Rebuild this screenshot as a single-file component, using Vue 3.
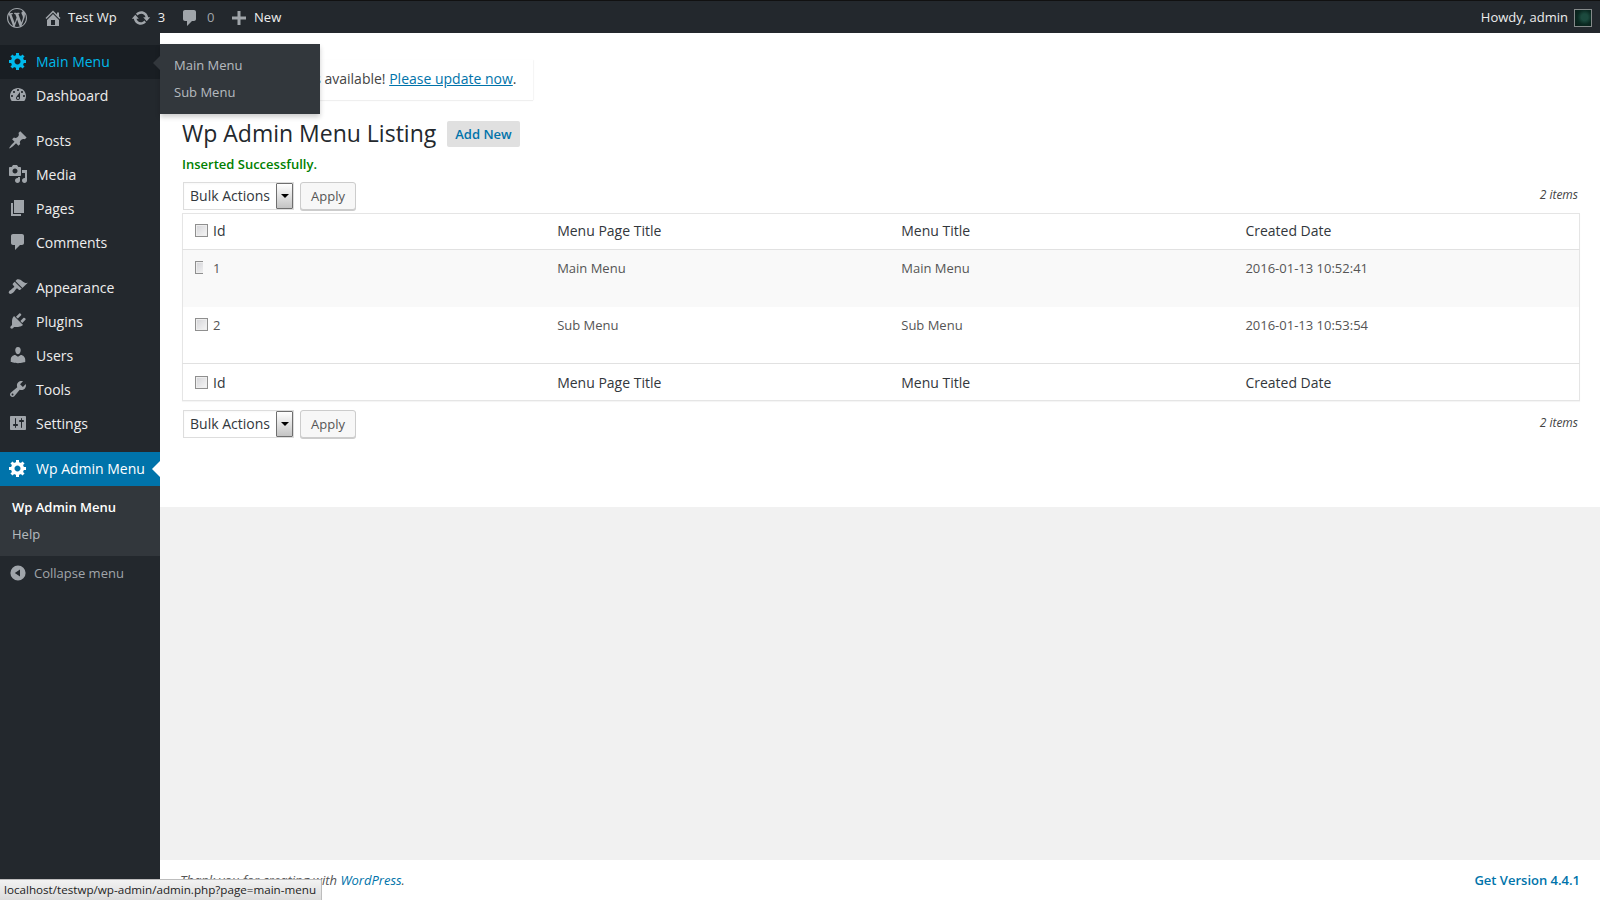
<script setup>
const icons = {
  wp: 'M20 10c0-5.51-4.49-10-10-10C4.48 0 0 4.49 0 10c0 5.52 4.48 10 10 10 5.51 0 10-4.48 10-10zM7.78 15.37L4.37 6.22c.55-.02 1.17-.08 1.17-.08.5-.06.44-1.13-.06-1.11 0 0-1.45.11-2.37.11-.18 0-.37 0-.58-.01C4.12 2.69 6.87 1.11 10 1.11c2.33 0 4.45.87 6.05 2.34-.68-.11-1.65.39-1.65 1.58 0 .74.45 1.36.9 2.1.35.61.55 1.36.55 2.46 0 1.49-1.4 5-1.4 5l-3.03-8.37c.54-.02.82-.17.82-.17.5-.05.44-1.25-.06-1.22 0 0-1.44.12-2.38.12-.87 0-2.33-.12-2.33-.12-.5-.03-.56 1.2-.06 1.22l.92.08 1.26 3.41zM17.41 10c.24-.64.74-1.87.43-4.25.7 1.29 1.05 2.71 1.05 4.25 0 3.29-1.73 6.24-4.4 7.78.97-2.59 1.94-5.2 2.92-7.78zM6.1 18.09C3.12 16.65 1.11 13.53 1.11 10c0-1.3.23-2.48.72-3.59C3.25 10.3 4.67 14.2 6.1 18.09zm4.03-6.63l2.58 6.98c-.86.29-1.76.45-2.71.45-.79 0-1.57-.11-2.29-.33.81-2.38 1.62-4.74 2.42-7.1z',
  home: 'M16 8.5l1.53 1.53-1.06 1.06L10 4.62l-6.47 6.47-1.06-1.06L10 2.5l4 4v-2h2v4zm-6-2.46l6 5.99V18H4v-5.97zM12 17v-5H8v5h4z',
  update: 'M10.2 3.28c3.53 0 6.43 2.61 6.92 6h2.08l-3.5 4-3.5-4h2.32c-.45-1.97-2.21-3.44-4.32-3.44-1.45 0-2.73.71-3.54 1.78L4.95 5.66C6.23 4.2 8.11 3.28 10.2 3.28zm-.4 13.44c-3.52 0-6.43-2.61-6.92-6H.8l3.5-4c1.17 1.33 2.33 2.67 3.5 4H5.48c.45 1.97 2.21 3.44 4.32 3.44 1.45 0 2.73-.71 3.54-1.78l1.71 1.95c-1.28 1.46-3.15 2.39-5.25 2.39z',
  comment: 'M5 2h9c1.1 0 2 .9 2 2v7c0 1.1-.9 2-2 2h-2l-5 5v-5H5c-1.1 0-2-.9-2-2V4c0-1.1.9-2 2-2z',
  plus: 'M17 8.5v3h-5.5V17h-3v-5.5H3v-3h5.5V3h3v5.5z',
  gear: 'M18 12h-2.18c-.17.7-.44 1.35-.81 1.93l1.54 1.54-2.1 2.1-1.54-1.54c-.58.36-1.23.63-1.91.79V19H8v-2.18c-.68-.16-1.33-.43-1.91-.79l-1.54 1.54-2.12-2.12 1.54-1.54c-.36-.58-.63-1.23-.79-1.91H1V9.03h2.17c.16-.7.44-1.35.8-1.94L2.43 5.55l2.1-2.1 1.54 1.54c.58-.37 1.24-.64 1.93-.81V2h3v2.18c.68.16 1.33.43 1.91.79l1.54-1.54 2.12 2.12-1.54 1.54c.36.59.64 1.24.8 1.94H18V12zm-8.5 1.5c1.66 0 3-1.34 3-3s-1.34-3-3-3-3 1.34-3 3 1.34 3 3 3z',
  dashboard: 'M3.76 16h12.48c1.1-1.37 1.76-3.11 1.76-5 0-4.42-3.58-8-8-8s-8 3.58-8 8c0 1.89.66 3.63 1.76 5zM10 4c.55 0 1 .45 1 1s-.45 1-1 1-1-.45-1-1 .45-1 1-1zM6 6c.55 0 1 .45 1 1s-.45 1-1 1-1-.45-1-1 .45-1 1-1zm8 0c.55 0 1 .45 1 1s-.45 1-1 1-1-.45-1-1 .45-1 1-1zm-5.37 5.55L12 7v6c0 1.1-.9 2-2 2s-2-.9-2-2c0-.57.24-1.08.63-1.45zM4 10c.55 0 1 .45 1 1s-.45 1-1 1-1-.45-1-1 .45-1 1-1zm12 0c.55 0 1 .45 1 1s-.45 1-1 1-1-.45-1-1 .45-1 1-1zm-5 3c0-.55-.45-1-1-1s-1 .45-1 1 .45 1 1 1 1-.45 1-1z',
  posts: 'M10.44 3.02l1.82-1.82 6.36 6.35-1.83 1.82c-1.05-.68-2.48-.57-3.41.36l-.75.75c-.92.93-1.04 2.35-.35 3.41l-1.83 1.82-2.41-2.41-2.8 2.79c-.42.42-3.38 2.71-3.8 2.29s1.86-3.39 2.28-3.81l2.79-2.79L4.1 9.36l1.83-1.82c1.05.69 2.48.57 3.4-.36l.75-.75c.93-.92 1.05-2.35.36-3.41z',
  media: 'M13 11V4c0-.55-.45-1-1-1h-1.67L9 1H5L3.67 3H2c-.55 0-1 .45-1 1v7c0 .55.45 1 1 1h10c.55 0 1-.45 1-1zM7 4.5c1.38 0 2.5 1.12 2.5 2.5S8.38 9.5 7 9.5 4.5 8.38 4.5 7 5.62 4.5 7 4.5zM14 6h5v10.5c0 1.38-1.12 2.5-2.5 2.5S14 17.88 14 16.5s1.12-2.5 2.5-2.5c.17 0 .34.02.5.05V9h-3V6zm-4 8.05V13h2v3.5c0 1.38-1.12 2.5-2.5 2.5S7 17.88 7 16.5 8.12 14 9.5 14c.17 0 .34.02.5.05z',
  pages: 'M6 15V2h10v13H6zm-1 1h8v2H3V5h2v11z',
  appearance: 'M14.48 11.06L7.41 3.99l1.5-1.5c.5-.56 2.3-.47 3.51.32 1.21.8 1.43 1.28 2.91 2.1 1.18.64 2.45 1.26 4.45.85zm-.71.71L6.7 4.7 4.93 6.47c-.39.39-.39 1.02 0 1.41l1.06 1.06c.39.39.39 1.03 0 1.42-.6.6-1.43 1.11-2.21 1.69-.35.26-.7.53-1.01.84C1.43 13.23 0 15.2 1.26 16.46c1.26 1.25 3.22-.17 4.52-1.51.3-.3.58-.65.84-1 .58-.79 1.09-1.62 1.69-2.21.39-.39 1.02-.39 1.41 0l1.06 1.06c.39.39 1.02.39 1.41 0z',
  plugins: 'M13.11 4.36L9.87 7.6 8 5.73l3.24-3.24c.35-.34 1.05-.2 1.56.32.52.51.66 1.21.31 1.55zm-8 1.77l.91-1.12 9.01 9.01-1.19.84c-.71.71-2.63 1.16-3.82 1.16H6.14L4.9 17.26c-.59.59-1.54.59-2.12 0-.59-.58-.59-1.53 0-2.12l1.24-1.24v-3.88c0-1.13.4-3.19 1.09-3.89zm7.26 3.97l3.24-3.24c.34-.35 1.04-.21 1.55.31.52.51.66 1.21.31 1.55l-3.24 3.25z',
  users: 'M10 9.25c-2.27 0-2.73-3.44-2.73-3.44C7 4.02 7.82 2 9.97 2c2.16 0 2.98 2.02 2.71 3.81 0 0-.41 3.44-2.68 3.44zm0 2.57L12.72 10c2.39 0 4.52 2.33 4.52 4.53v2.49s-3.65 1.13-7.24 1.13c-3.65 0-7.24-1.13-7.24-1.13v-2.49c0-2.25 1.94-4.48 4.47-4.48z',
  tools: 'M16.68 9.77c-1.34 1.34-3.3 1.67-4.95.99l-5.41 6.52c-.99.99-2.59.99-3.58 0s-.99-2.59 0-3.57l6.52-5.42c-.68-1.65-.35-3.61.99-4.95 1.28-1.28 3.12-1.62 4.72-1.06l-2.89 2.89 2.82 2.82 2.86-2.87c.53 1.58.18 3.39-1.08 4.65zM3.81 16.21c.4.39 1.04.39 1.43 0 .4-.4.4-1.04 0-1.43-.39-.4-1.03-.4-1.43 0-.39.39-.39 1.03 0 1.43z',
  settings: 'M18 16V4c0-.55-.45-1-1-1H3c-.55 0-1 .45-1 1v12c0 .55.45 1 1 1h14c.55 0 1-.45 1-1zM8 11h1c.55 0 1 .45 1 1s-.45 1-1 1H8v1.5c0 .28-.22.5-.5.5s-.5-.22-.5-.5V13H6c-.55 0-1-.45-1-1s.45-1 1-1h1V5.5c0-.28.22-.5.5-.5s.5.22.5.5V11zm5-2h-1c-.55 0-1-.45-1-1s.45-1 1-1h1V5.5c0-.28.22-.5.5-.5s.5.22.5.5V7h1c.55 0 1 .45 1 1s-.45 1-1 1h-1v5.5c0 .28-.22.5-.5.5s-.5-.22-.5-.5V9z',
  collapse: 'M10 .5a9.5 9.5 0 1 0 0 19 9.5 9.5 0 0 0 0-19zM12.5 5.5v9L6 10z'
}
const groups = [
  [{ label: 'Main Menu', icon: 'gear', state: 'hover' }, { label: 'Dashboard', icon: 'dashboard' }],
  [{ label: 'Posts', icon: 'posts' }, { label: 'Media', icon: 'media' }, { label: 'Pages', icon: 'pages' }, { label: 'Comments', icon: 'comment' }],
  [{ label: 'Appearance', icon: 'appearance' }, { label: 'Plugins', icon: 'plugins' }, { label: 'Users', icon: 'users' }, { label: 'Tools', icon: 'tools' }, { label: 'Settings', icon: 'settings' }]
]
const columns = ['Id', 'Menu Page Title', 'Menu Title', 'Created Date']
const rows = [
  ['1', 'Main Menu', 'Main Menu', '2016-01-13 10:52:41'],
  ['2', 'Sub Menu', 'Sub Menu', '2016-01-13 10:53:54']
]
</script>

<template>
  <div class="page">
    <header class="topbar">
      <svg class="bar-logo" viewBox="0 0 20 20"><path :d="icons.wp" /></svg>
      <svg class="bar-icon home" viewBox="0 0 20 20"><path :d="icons.home" /></svg>
      <span class="bar-text site">Test Wp</span>
      <svg class="bar-icon update" viewBox="0 0 20 20"><path :d="icons.update" /></svg>
      <span class="bar-text count">3</span>
      <svg class="bar-icon comment" viewBox="0 0 20 20"><path :d="icons.comment" /></svg>
      <span class="bar-text zero">0</span>
      <svg class="bar-icon plus" viewBox="0 0 20 20"><path :d="icons.plus" /></svg>
      <span class="bar-text">New</span>
      <span class="bar-text howdy">Howdy, admin</span>
      <span class="avatar"></span>
    </header>

    <div class="shell">
      <aside class="sidebar">
        <nav v-for="(group, i) in groups" :key="i" class="menu-group">
          <a v-for="item in group" :key="item.label" class="menu-item" :class="item.state">
            <svg class="menu-icon" viewBox="0 0 20 20"><path :d="icons[item.icon]" /></svg>
            <span>{{ item.label }}</span>
          </a>
        </nav>
        <a class="menu-item current">
          <svg class="menu-icon" viewBox="0 0 20 20"><path :d="icons.gear" /></svg>
          <span>Wp Admin Menu</span>
        </a>
        <div class="submenu">
          <a class="sub-link strong">Wp Admin Menu</a>
          <a class="sub-link">Help</a>
        </div>
        <a class="collapse">
          <svg class="collapse-icon" viewBox="0 0 20 20"><path fill-rule="evenodd" :d="icons.collapse" /></svg>
          <span>Collapse menu</span>
        </a>
        <div class="flyout">
          <a class="fly-link">Main Menu</a>
          <a class="fly-link">Sub Menu</a>
        </div>
      </aside>

      <main class="main">
        <section class="content">
          <div class="nag"><a class="nag-link">WordPress 4.4.2</a> is available! <a class="nag-link">Please update now</a>.</div>
          <div class="title-row">
            <h1>Wp Admin Menu Listing</h1>
            <a class="add-new">Add New</a>
          </div>
          <p class="success">Inserted Successfully.</p>

          <div class="tablenav">
            <div class="fake-select"><span>Bulk Actions</span><i class="select-btn"></i></div>
            <button class="apply">Apply</button>
            <span class="num">2 items</span>
          </div>

          <table class="list">
            <thead>
              <tr>
                <th class="cb"><input type="checkbox" /></th>
                <th v-for="c in columns" :key="c">{{ c }}</th>
              </tr>
            </thead>
            <tbody>
              <tr v-for="(row, i) in rows" :key="row[0]" :class="{ alt: i === 0 }">
                <td class="cb"><input type="checkbox" /></td>
                <td v-for="(cell, j) in row" :key="j">{{ cell }}</td>
              </tr>
            </tbody>
            <tfoot>
              <tr>
                <th class="cb"><input type="checkbox" /></th>
                <th v-for="c in columns" :key="c">{{ c }}</th>
              </tr>
            </tfoot>
          </table>

          <div class="tablenav bottom">
            <div class="fake-select"><span>Bulk Actions</span><i class="select-btn"></i></div>
            <button class="apply">Apply</button>
            <span class="num">2 items</span>
          </div>
        </section>
        <div class="gap"></div>
        <footer class="footer">
          <em>Thank you for creating with <a>WordPress</a>.</em>
          <strong>Get Version 4.4.1</strong>
        </footer>
      </main>
    </div>

    <div class="status">localhost/testwp/wp-admin/admin.php?page=main-menu</div>
  </div>
</template>

<style>
html, body { margin: 0; background: #f1f1f1; }
</style>

<style scoped>
.page {
  position: relative;
  height: 900px;
  display: flex;
  flex-direction: column;
  overflow: hidden;
  font-family: "Open Sans", sans-serif;
  font-size: 13px;
  color: #444;
}
a { cursor: pointer; }

/* top bar */
.topbar {
  height: 33px;
  box-sizing: border-box;
  flex: none;
  display: flex;
  align-items: center;
  padding: 1px 8px 0 7px;
  background: #23282d;
  border-top: 1px solid #111;
  color: #eee;
}
.topbar svg { fill: #a0a5aa; display: block; flex: none; }
.bar-logo { width: 20px; height: 20px; margin-right: 16px; }
.bar-icon { width: 20px; height: 20px; }
.bar-text { line-height: 20px; white-space: nowrap; margin-bottom: 2px; }
.home { margin: 0 5px 0 0; }
.site { margin-right: 14px; }
.update { margin-right: 7px; }
.count { margin-right: 15px; }
.comment { margin-right: 7px; }
.zero { color: #a0a5aa; margin-right: 15px; width: 8px; }
.plus { margin: 0 5px 0 -1px; }
.howdy { margin-left: auto; margin-right: 6px; }
.avatar {
  box-sizing: border-box;
  width: 18px;
  height: 18px;
  border: 1px solid #858a8a;
  background: radial-gradient(circle at 60% 45%, #1c4a3e 0 25%, #0b2a22 55%, #081a16 100%);
}

.shell { flex: 1; display: flex; min-height: 0; }

/* sidebar */
.sidebar {
  position: relative;
  width: 160px;
  flex: none;
  background: #23282d;
  padding-top: 12px;
}
.menu-group { display: block; margin-bottom: 11px; }
.menu-item {
  height: 34px;
  box-sizing: border-box;
  padding-bottom: 2px;
  display: flex;
  align-items: center;
  color: #eee;
  font-size: 14px;
  white-space: nowrap;
}
.menu-icon { width: 20px; height: 20px; margin: 0 8px; flex: none; fill: #a0a5aa; }
.menu-item.hover { background: #191e23; color: #00b9eb; }
.menu-item.hover .menu-icon { fill: #00b9eb; }
.menu-item.current { position: relative; background: #0073aa; color: #fff; }
.menu-item.current .menu-icon { fill: #fff; }
.menu-item.current::after {
  content: "";
  position: absolute;
  right: 0;
  top: 9px;
  border: 8px solid transparent;
  border-right-color: #fff;
  border-left-width: 0;
}
.submenu {
  background: #32373c;
  padding: 7px 0;
  height: 70px;
  box-sizing: border-box;
}
.sub-link {
  display: block;
  height: 27px;
  line-height: 28px;
  padding-left: 12px;
  font-size: 13px;
  color: rgba(240, 245, 250, .7);
}
.sub-link.strong { color: #fff; font-weight: 600; }
.collapse {
  height: 34px;
  display: flex;
  align-items: center;
  padding-left: 10px;
  color: #a0a5aa;
  font-size: 13px;
}
.collapse-icon { width: 16px; height: 16px; fill: #a0a5aa; margin-right: 8px; }
.flyout {
  position: absolute;
  left: 160px;
  top: 11px;
  z-index: 5;
  width: 160px;
  height: 70px;
  box-sizing: border-box;
  padding: 7px 0;
  background: #32373c;
  box-shadow: 0 3px 5px rgba(0, 0, 0, .2);
}
.flyout::before {
  content: "";
  position: absolute;
  left: -7px;
  top: 11px;
  border: 8px solid transparent;
  border-right-color: #32373c;
  border-left-width: 0;
  width: 0;
}
.fly-link {
  display: block;
  height: 27px;
  line-height: 28px;
  padding-left: 14px;
  color: rgba(240, 245, 250, .7);
}

/* main */
.main { flex: 1; min-width: 0; display: flex; flex-direction: column; }
.content {
  height: 474px;
  box-sizing: border-box;
  background: #fff;
  padding: 27px 20px 0 22px;
}
.gap { flex: 1; background: #f1f1f1; }
.nag {
  display: inline-block;
  box-sizing: border-box;
  height: 40px;
  width: 351px;
  padding: 8px 15px 0 15px;
  line-height: 21px;
  font-size: 14px;
  color: #444;
  background: #fff;
  border-left: 4px solid #ffba00;
  box-shadow: 0 1px 1px rgba(0, 0, 0, .06), 1px 0 1px rgba(0, 0, 0, .03);
  white-space: nowrap;
}
.nag-link { color: #0073aa; text-decoration: underline; }
.title-row { display: flex; align-items: center; margin-top: 20px; height: 28px; }
h1 {
  margin: 0 0 2px;
  font-size: 23px;
  font-weight: 400;
  line-height: 28px;
  color: #23282d;
  white-space: nowrap;
}
.add-new {
  margin-left: 11px;
  height: 26px;
  line-height: 26px;
  padding: 0 8px;
  border-radius: 2px;
  background: #e0e0e0;
  color: #0073aa;
  font-weight: 600;
}
.success {
  margin: 7px 0 0;
  line-height: 18px;
  color: #008000;
  font-weight: 600;
}
.tablenav {
  display: flex;
  align-items: center;
  height: 28px;
  margin-top: 9px;
  padding-left: 1px;
}
.fake-select {
  box-sizing: border-box;
  width: 111px;
  height: 28px;
  display: flex;
  align-items: center;
  justify-content: space-between;
  padding: 0 0 0 6px;
  border: 1px solid #ddd;
  background: #fff;
  color: #32373c;
  font-size: 14px;
  box-shadow: inset 0 1px 2px rgba(0, 0, 0, .03);
}
.fake-select span { margin-bottom: 2px; }
.select-btn {
  position: relative;
  box-sizing: border-box;
  width: 17px;
  height: 26px;
  border: 1px solid #6f6f6f;
  border-radius: 1px;
  background: linear-gradient(#fff, #c4c4c4);
}
.select-btn::after {
  content: "";
  position: absolute;
  left: 4px;
  top: 10px;
  border: 4px solid transparent;
  border-top-color: #000;
  border-bottom-width: 0;
}
.apply {
  margin-left: 6px;
  box-sizing: border-box;
  width: 56px;
  height: 28px;
  padding: 0;
  border: 1px solid #ccc;
  border-radius: 3px;
  background: #f7f7f7;
  box-shadow: 0 1px 0 #ccc;
  color: #555;
  font: 13px "Open Sans", sans-serif;
}
.num {
  margin-left: auto;
  padding: 0 2px 4px 0;
  font-size: 12px;
  font-style: italic;
  color: #444;
}
.list {
  width: 100%;
  margin-top: 3px;
  border-collapse: collapse;
  table-layout: fixed;
  background: #fff;
  border: 1px solid #e5e5e5;
  box-shadow: 0 1px 1px rgba(0, 0, 0, .04);
}
.list th {
  height: 37px;
  padding: 0 10px;
  text-align: left;
  font-size: 14px;
  font-weight: 400;
  color: #32373c;
}
.list thead th { border-bottom: 1px solid #e1e1e1; height: 36px; padding-bottom: 2px; box-sizing: border-box; }
.list tfoot th { border-top: 1px solid #e1e1e1; height: 36px; }
.list td {
  height: 57px;
  box-sizing: border-box;
  padding: 8px 10px;
  vertical-align: top;
  font-size: 13px;
  line-height: 20px;
  color: #555;
}
.list tr.alt td { background: #f9f9f9; }
.list .cb { width: 14px; padding-left: 10px; padding-right: 10px; }
.list td.cb { padding-top: 11px; }
input[type="checkbox"] {
  appearance: none;
  display: block;
  box-sizing: border-box;
  width: 13px;
  height: 13px;
  margin: 0 0 0 2px;
  border: 1px solid #8f8f8f;
  background: linear-gradient(135deg, #d4d4d8, #f6f6f6);
  box-shadow: inset 0 0 0 1px #eee;
}

/* footer */
.footer {
  height: 40px;
  flex: none;
  box-sizing: border-box;
  display: flex;
  align-items: center;
  justify-content: space-between;
  padding: 0 20px 0 20px;
  background: #fff;
  color: #555;
}
.footer a { color: #0073aa; }
.footer strong { color: #0073aa; font-weight: 600; }

.status {
  position: absolute;
  left: 0;
  bottom: 0;
  z-index: 10;
  box-sizing: border-box;
  width: 322px;
  height: 21px;
  line-height: 20px;
  padding-left: 4px;
  border-top: 1px solid #bdbdbd;
  border-right: 1px solid #bdbdbd;
  border-top-right-radius: 2px;
  background: linear-gradient(#f2f2f2, #dcdcdc);
  color: #222;
  font-size: 11.65px;
  white-space: nowrap;
}
</style>
